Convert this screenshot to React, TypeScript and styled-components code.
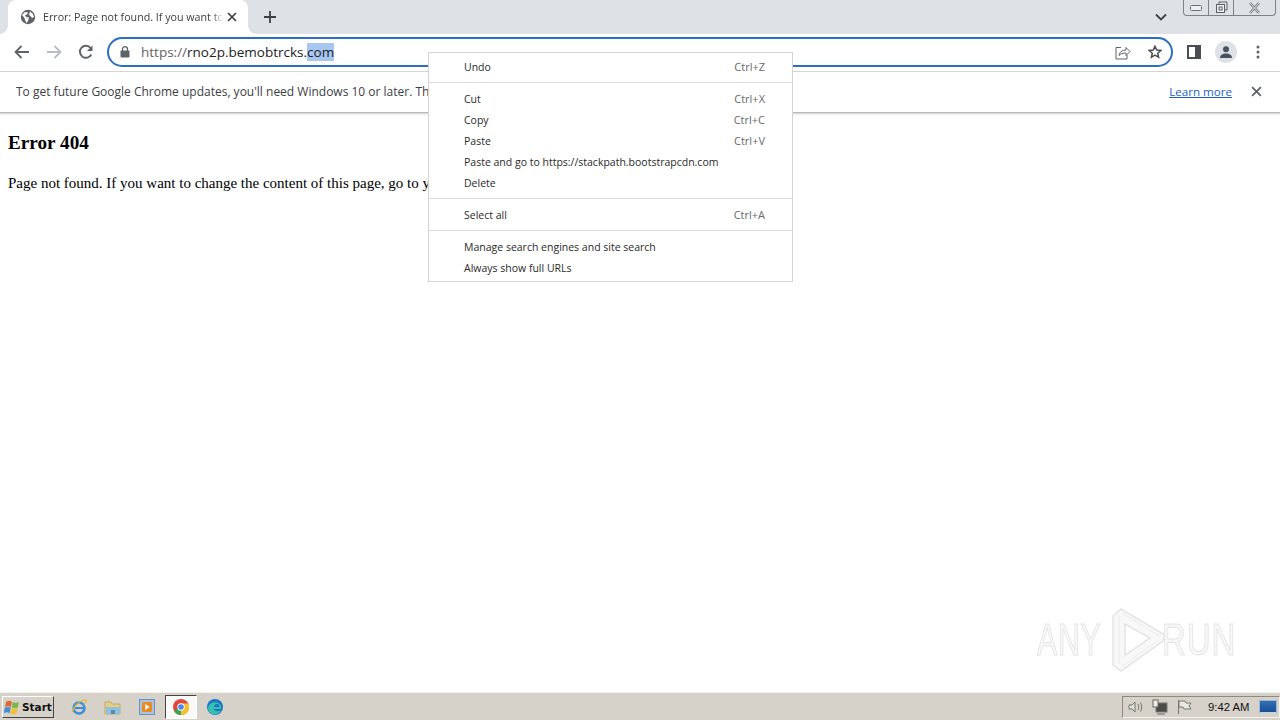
import React from 'react';
import styled, { createGlobalStyle } from 'styled-components';

const GlobalStyle = createGlobalStyle`
  html, body, #root {
    margin: 0;
    height: 100%;
  }
  body {
    overflow: hidden;
    background: #fff;
    font-family: "Open Sans", "Noto Sans", sans-serif;
  }
`;

const Screen = styled.div`
  position: relative;
  display: flex;
  flex-direction: column;
  width: 1280px;
  height: 720px;
  overflow: hidden;
`;

const TabStrip = styled.div`
  display: flex;
  height: 34px;
  flex-shrink: 0;
  padding-left: 8px;
  background: #dee1e6;
`;

const Tab = styled.div`
  position: relative;
  display: flex;
  align-items: center;
  width: 240px;
  height: 34px;
  padding: 0 11px 0 12px;
  box-sizing: border-box;
  background: #fff;
  border-radius: 8px 8px 0 0;

  &:before,
  &:after {
    content: "";
    position: absolute;
    bottom: 0;
    width: 8px;
    height: 8px;
  }
  &:before {
    left: -8px;
    background: radial-gradient(circle at 0 0, transparent 7.5px, #fff 8px);
  }
  &:after {
    right: -8px;
    background: radial-gradient(circle at 100% 0, transparent 7.5px, #fff 8px);
  }
`;

const TabTitle = styled.span`
  flex: 1;
  margin-left: 7px;
  overflow: hidden;
  white-space: nowrap;
  font-size: 10.7px;
  color: #3c4043;
  -webkit-mask-image: linear-gradient(90deg, #000 92%, transparent 98%);
  mask-image: linear-gradient(90deg, #000 92%, transparent 98%);
`;

const IconSlot = styled.span`
  display: flex;
  align-items: center;
  justify-content: center;
  flex-shrink: 0;
`;

const NewTab = styled(IconSlot)`
  width: 28px;
  height: 34px;
  margin-left: 8px;
`;

const StripSpacer = styled.div`
  flex: 1;
`;

const TabListButton = styled(IconSlot)`
  width: 20px;
  height: 34px;
  margin-right: 12px;
`;

const WindowControls = styled.div`
  display: flex;
  align-self: flex-start;
  height: 16px;
  margin-right: 4px;
  box-sizing: border-box;
  border: 1px solid #7d8288;
  border-top: none;
  border-radius: 0 0 4px 4px;
`;

const WindowButton = styled(IconSlot)<{ $w: number; $last?: boolean }>`
  width: ${p => p.$w}px;
  border-right: ${p => (p.$last ? 'none' : '1px solid #7d8288')};
`;

const Toolbar = styled.div`
  display: flex;
  align-items: center;
  height: 38px;
  flex-shrink: 0;
  padding: 0 0 1px 6px;
  box-sizing: border-box;
  background: #fff;
  border-bottom: 1px solid #d5d7da;
`;

const NavButton = styled(IconSlot)`
  width: 32px;
  height: 32px;
`;

const Omnibox = styled.div`
  display: flex;
  align-items: center;
  width: 1066px;
  height: 30px;
  margin-left: 5px;
  padding: 0 0 0 11px;
  box-sizing: border-box;
  border: 2px solid #2a6fc0;
  border-radius: 15px;
`;

const Url = styled.div`
  flex: 1;
  margin-left: 11px;
  font-size: 13.5px;
  line-height: 18px;
  color: #5f6368;
  white-space: nowrap;
`;

const UrlHost = styled.span`
  color: #202124;
`;

const UrlSelected = styled.span`
  color: #202124;
  background: #a8c7f0;
`;

const OmniAction = styled(IconSlot)`
  width: 32px;
`;

const SidePanelButton = styled(IconSlot)`
  width: 20px;
  margin-left: 11px;
`;

const Avatar = styled.span`
  display: flex;
  align-items: center;
  justify-content: center;
  width: 22px;
  height: 22px;
  margin-left: 11px;
  border-radius: 50%;
  background: #dee1e6;
`;

const MenuDots = styled(IconSlot)`
  width: 20px;
  margin-left: 11px;
`;

const InfoBar = styled.div`
  display: flex;
  align-items: center;
  height: 41px;
  flex-shrink: 0;
  padding: 0 18px 2px 16px;
  box-sizing: border-box;
  border-bottom: 1px solid #b9b9b9;
  box-shadow: 0 1px 2px rgba(0, 0, 0, 0.2);
  font-size: 12px;
  color: #3c4043;
`;

const InfoText = styled.span`
  flex: 1;
  white-space: nowrap;
  overflow: hidden;
`;

const LearnMore = styled.a`
  margin-right: 19px;
  font-size: 11.6px;
  color: #1a62c0;
  text-decoration: underline;
`;

const Page = styled.main`
  flex: 1;
  padding: 19px 8px 0;
  font-family: "Liberation Serif", "Times New Roman", serif;
  color: #000;
`;

const ErrorTitle = styled.h2`
  margin: 0 0 20px;
  font-size: 19.2px;
  line-height: 22px;
  font-weight: bold;
`;

const ErrorText = styled.p`
  margin: 0;
  font-size: 15px;
  line-height: 18px;
  white-space: nowrap;
`;

const ContextMenu = styled.div`
  position: absolute;
  left: 428px;
  top: 52px;
  width: 365px;
  height: 230px;
  box-sizing: border-box;
  padding: 4px 0;
  background: #fff;
  border: 1px solid #d4d4d4;
  font-size: 10.5px;
  color: #2a2a2a;
`;

const MenuRow = styled.div`
  display: flex;
  justify-content: space-between;
  height: 21px;
  padding: 0 27px 0 35px;
  line-height: 21px;
`;

const Shortcut = styled.span`
  font-size: 11px;
  line-height: 20px;
  color: #6a6a6a;
`;

const MenuDivider = styled.div`
  height: 1px;
  margin: 4px 0 6px;
  background: #dcdcdc;
`;

const Watermark = styled.div`
  position: absolute;
  left: 1037px;
  top: 608px;
  display: flex;
  align-items: center;
  height: 64px;
  gap: 2px;
  font-family: "Liberation Sans", Arial, sans-serif;
`;

const WatermarkWord = styled.span`
  display: inline-block;
  font-size: 42px;
  letter-spacing: 1px;
  color: #f8f8f8;
  -webkit-text-stroke: 1px #e4e4e4;
  transform: scale(0.72, 1.06);
  transform-origin: left center;
  white-space: nowrap;
`;

const WatermarkLeft = styled(WatermarkWord)`
  width: 66px;
`;

const WatermarkRight = styled(WatermarkWord)`
  width: 72px;
  margin-left: -7px;
  transform: scale(0.79, 1.06);
`;

const Taskbar = styled.footer`
  display: flex;
  align-items: center;
  height: 28px;
  flex-shrink: 0;
  box-sizing: border-box;
  padding: 1px 0 0 2px;
  background: #d6d2ca;
  border-top: 1px solid #f2f0ea;
`;

const StartButton = styled.div`
  display: flex;
  align-items: center;
  gap: 1px;
  width: 52px;
  height: 22px;
  box-sizing: border-box;
  padding-left: 1px;
  background: #d6d2ca;
  border: 1px solid;
  border-color: #fff #444 #444 #fff;
  font-family: "DejaVu Sans", Verdana, sans-serif;
  font-size: 10.5px;
  font-weight: bold;
  color: #111;
`;

const QuickLaunch = styled.div`
  display: flex;
  align-items: center;
  margin-left: 8px;
`;

const LaunchIcon = styled(IconSlot)<{ $active?: boolean }>`
  width: 34px;
  height: 24px;
  box-sizing: border-box;
  ${p => p.$active && `
    width: 32px;
    margin: 0 1px;
    background: #fbfaf8;
    border: 1px solid;
    border-color: #444 #fff #fff #444;
  `}
`;

const TaskSpacer = styled.div`
  flex: 1;
`;

const Tray = styled.div`
  display: flex;
  align-items: center;
  width: 158px;
  height: 22px;
  box-sizing: border-box;
  padding-left: 1px;
  border: 1px solid;
  border-color: #8d8a84 #f4f2ee #f4f2ee #8d8a84;
`;

const TrayIcon = styled(IconSlot)`
  width: 24px;
`;

const Clock = styled.span`
  margin-left: 12px;
  font-family: "Liberation Sans", Arial, sans-serif;
  font-size: 11.3px;
  color: #111;
  white-space: nowrap;
`;

const ShowDesktop = styled.span`
  display: block;
  width: 16px;
  height: 11px;
  margin: 0 2px 0 10px;
  background: linear-gradient(180deg, #2f6fb8, #1c4f94);
  border: 1px solid #9fb6cf;
  border-bottom: 2px solid #c9d4df;
`;

const GlobeIcon = () => (
  <svg width="16" height="16" viewBox="0 0 16 16">
    <circle cx="8" cy="8" r="7.2" fill="#5f6368" />
    <path d="M2 6l3-3 3 .5-1 2-2 .5 1 2 3 .5-1 3.5-1.5 2L5 11 4.5 9zM10 2.500l3 2.500 1 3-2 1-1.500-2-1.500-1 .5-2z" fill="#fff" />
  </svg>
);

const CloseGlyph = ({ size, color, w }: { size: number; color: string; w: number }) => (
  <svg width={size} height={size} viewBox="0 0 10 10">
    <path d="M1 1l8 8M9 1l-8 8" stroke={color} strokeWidth={w} fill="none" />
  </svg>
);

const ContextItems: (['row', string, string?] | ['sep'])[] = [
  ['row', 'Undo', 'Ctrl+Z'],
  ['sep'],
  ['row', 'Cut', 'Ctrl+X'],
  ['row', 'Copy', 'Ctrl+C'],
  ['row', 'Paste', 'Ctrl+V'],
  ['row', 'Paste and go to https://stackpath.bootstrapcdn.com'],
  ['row', 'Delete'],
  ['sep'],
  ['row', 'Select all', 'Ctrl+A'],
  ['sep'],
  ['row', 'Manage search engines and site search'],
  ['row', 'Always show full URLs'],
];

const App = () => (
  <Screen>
    <GlobalStyle />
    <TabStrip>
      <Tab>
        <GlobeIcon />
        <TabTitle>Error: Page not found. If you want to change</TabTitle>
        <CloseGlyph size={10} color="#3c4043" w={1.7} />
      </Tab>
      <NewTab>
        <svg width="14" height="14" viewBox="0 0 14 14">
          <path d="M7 1v12M1 7h12" stroke="#3c4043" strokeWidth="1.800" />
        </svg>
      </NewTab>
      <StripSpacer />
      <TabListButton>
        <svg width="12" height="8" viewBox="0 0 12 8">
          <path d="M1 1.500l5 5 5-5" stroke="#3c4043" strokeWidth="1.800" fill="none" />
        </svg>
      </TabListButton>
      <WindowControls>
        <WindowButton $w={24}>
          <svg width="12" height="6" viewBox="0 0 12 6">
            <rect x="0.500" y="0.500" width="11" height="5" rx="1" fill="#eef0f2" stroke="#6d7176" />
          </svg>
        </WindowButton>
        <WindowButton $w={24}>
          <svg width="13" height="13" viewBox="0 0 13 13">
            <path d="M4 3V1h8v8h-2" fill="none" stroke="#5c6066" />
            <rect x="1.500" y="3.500" width="8" height="8" fill="#eef0f2" stroke="#5c6066" />
            <rect x="4" y="6" width="3" height="3" fill="none" stroke="#5c6066" />
          </svg>
        </WindowButton>
        <WindowButton $w={41} $last>
          <svg width="13" height="12" viewBox="0 0 13 12">
            <path d="M2 1l9 10M11 1L2 11" stroke="#6d7176" strokeWidth="2.500" />
            <path d="M2 1l9 10M11 1L2 11" stroke="#eef0f2" strokeWidth="1" />
          </svg>
        </WindowButton>
      </WindowControls>
    </TabStrip>

    <Toolbar>
      <NavButton>
        <svg width="16" height="14" viewBox="0 0 16 14">
          <path d="M15 7H2M7.500 1L1.500 7l6 6" stroke="#5f6368" strokeWidth="1.800" fill="none" />
        </svg>
      </NavButton>
      <NavButton>
        <svg width="16" height="14" viewBox="0 0 16 14">
          <path d="M1 7h13M8.500 1l6 6-6 6" stroke="#b9bcc0" strokeWidth="1.800" fill="none" />
        </svg>
      </NavButton>
      <NavButton>
        <svg width="16" height="16" viewBox="0 0 16 16">
          <path d="M13.300 10.500A6 6 0 1 1 12.600 4" stroke="#5f6368" strokeWidth="1.900" fill="none" />
          <path d="M14.500 1.500V7H9z" fill="#5f6368" />
        </svg>
      </NavButton>
      <Omnibox>
        <svg width="10" height="12" viewBox="0 0 10 12">
          <rect x="0.500" y="4.500" width="9" height="7" rx="1" fill="#5f6368" />
          <path d="M2.500 5V3.200a2.500 2.500 0 0 1 5 0V5" stroke="#5f6368" strokeWidth="1.300" fill="none" />
        </svg>
        <Url>
          https://<UrlHost>rno2p.bemobtrcks.</UrlHost>
          <UrlSelected>com</UrlSelected>
        </Url>
        <OmniAction>
          <svg width="16" height="15" viewBox="0 0 16 15">
            <path d="M6 2.500H1v11.500h11v-4" stroke="#5f6368" strokeWidth="1" fill="none" />
            <path d="M4 10.500c.5-3.500 3-5.500 7-5.500V2.500l4 4-4 4V8c-3 0-5 .8-7 2.500z" stroke="#5f6368" strokeWidth="1" fill="none" />
          </svg>
        </OmniAction>
        <OmniAction>
          <svg width="14" height="14" viewBox="0 0 14 14">
            <path d="M7 1.300l1.700 3.800 4.100.4-3.100 2.700.9 4.100L7 10.200l-3.600 2.100.9-4.100-3.100-2.700 4.100-.4z" stroke="#4a4e52" strokeWidth="1.500" fill="none" />
          </svg>
        </OmniAction>
      </Omnibox>
      <SidePanelButton>
        <svg width="14" height="14" viewBox="0 0 14 14">
          <rect x="1" y="1" width="12" height="12" fill="#fff" stroke="#4a4e52" strokeWidth="2" />
          <rect x="8" y="1" width="5" height="12" fill="#4a4e52" />
        </svg>
      </SidePanelButton>
      <Avatar>
        <svg width="14" height="14" viewBox="0 0 14 14">
          <circle cx="7" cy="4.200" r="3" fill="#4a5160" />
          <path d="M1 13c0-3 2.500-4.500 6-4.500s6 1.500 6 4.500z" fill="#4a5160" />
        </svg>
      </Avatar>
      <MenuDots>
        <svg width="4" height="14" viewBox="0 0 4 14">
          <circle cx="2" cy="2" r="1.500" fill="#5f6368" />
          <circle cx="2" cy="7" r="1.500" fill="#5f6368" />
          <circle cx="2" cy="12" r="1.500" fill="#5f6368" />
        </svg>
      </MenuDots>
    </Toolbar>

    <InfoBar>
      <InfoText>To get future Google Chrome updates, you'll need Windows 10 or later. This computer is using Windows 7.</InfoText>
      <LearnMore>Learn more</LearnMore>
      <CloseGlyph size={11} color="#5f6368" w={1.6} />
    </InfoBar>

    <Page>
      <ErrorTitle>Error 404</ErrorTitle>
      <ErrorText>Page not found. If you want to change the content of this page, go to your website settings.</ErrorText>
    </Page>

    <ContextMenu>
      {ContextItems.map((item, i) =>
        item[0] === 'sep' ? (
          <MenuDivider key={i} />
        ) : (
          <MenuRow key={i}>
            <span>{item[1]}</span>
            {item[2] && <Shortcut>{item[2]}</Shortcut>}
          </MenuRow>
        ),
      )}
    </ContextMenu>

    <Watermark>
      <WatermarkLeft>ANY</WatermarkLeft>
      <svg width="62" height="64" viewBox="0 0 62 64">
        <path d="M8 8L16 1L60 27L58 33L16 63L8 57zM20 16V47L45 30z" fill="#f8f8f8" fillRule="evenodd" stroke="#e4e4e4" strokeWidth="1.500" />
        <path d="M14 7V56M17 5L54 28M17 58L54 32" fill="none" stroke="#ececec" />
      </svg>
      <WatermarkRight>RUN</WatermarkRight>
    </Watermark>

    <Taskbar>
      <StartButton>
        <svg width="17" height="17" viewBox="0 0 16 16">
          <path d="M2 2.500c2-1 3.500-1 5.500 0l-1 5c-2-1-3.500-1-5.500 0z" fill="#e2682c" />
          <path d="M8.300 2.900c2 1 3.500 1 5.700 0l-1 5c-2 1-3.700 1-5.700 0z" fill="#7ab648" />
          <path d="M.8 8.300c2-1 3.500-1 5.500 0l-1 5c-2-1-3.500-1-5.500 0z" fill="#3f8fd6" />
          <path d="M7.100 8.700c2 1 3.700 1 5.700 0l-1 5c-2 1-3.700 1-5.700 0z" fill="#f2bf2e" />
        </svg>
        Start
      </StartButton>
      <QuickLaunch>
        <LaunchIcon>
          <svg width="18" height="18" viewBox="0 0 18 18">
            <circle cx="9" cy="10" r="5.500" fill="none" stroke="#3a8fd8" strokeWidth="2.500" />
            <path d="M4 10h10" stroke="#3a8fd8" strokeWidth="2" />
            <path d="M2 14C5 6 11 2 16 2c1 2-1 4-2 5" fill="none" stroke="#e6b93c" strokeWidth="1.200" />
          </svg>
        </LaunchIcon>
        <LaunchIcon>
          <svg width="18" height="16" viewBox="0 0 18 16">
            <path d="M1 3h6l1 2h8v10H1z" fill="#e8cf85" stroke="#b99e58" strokeWidth="0.800" />
            <path d="M2 8h14v7H2z" fill="#8fc0dc" />
            <path d="M7 15v-4h4v4z" fill="#5a8cab" />
          </svg>
        </LaunchIcon>
        <LaunchIcon>
          <svg width="16" height="16" viewBox="0 0 16 16">
            <rect x="0.500" y="0.500" width="15" height="15" fill="#a9c3e3" stroke="#6f92bb" />
            <rect x="3" y="3" width="10" height="10" rx="1.500" fill="#ea8a1f" />
            <path d="M6.300 5l4.200 3-4.200 3z" fill="#fff" />
          </svg>
        </LaunchIcon>
        <LaunchIcon $active>
          <svg width="16" height="16" viewBox="0 0 16 16">
            <circle cx="8" cy="8" r="8" fill="#e0463a" />
            <path d="M8 8L1 12a8 8 0 0 0 7 4c1 0 2-.2 2.500-.5z" fill="#3aa757" />
            <path d="M8 4.500h7.500A8 8 0 0 1 8 16z" fill="#f5c02e" />
            <circle cx="8" cy="8" r="3.700" fill="#fff" />
            <circle cx="8" cy="8" r="2.800" fill="#4688ec" />
          </svg>
        </LaunchIcon>
        <LaunchIcon>
          <svg width="18" height="18" viewBox="0 0 18 18">
            <circle cx="9" cy="9" r="8" fill="#1b74c4" />
            <path d="M2 10c1-5 6-7 10-5 3 1.500 4 4 3 6H8c0 2 3 3 7 1.500-2 4-7 5-10 3-2-1.300-3-3.500-3-5.500z" fill="#35c1b0" />
            <path d="M8 9c0-2 1.500-3 3-3s2.500 1 2.500 3z" fill="#1b74c4" />
          </svg>
        </LaunchIcon>
      </QuickLaunch>
      <TaskSpacer />
      <Tray>
        <TrayIcon>
          <svg width="16" height="16" viewBox="0 0 16 16">
            <path d="M1 6h3l3-3v10l-3-3H1z" fill="#dfdfdb" stroke="#77776f" />
            <path d="M10 5c1 2 1 4 0 6M12.500 3.500c1.500 3 1.500 6 0 9" stroke="#77776f" fill="none" />
          </svg>
        </TrayIcon>
        <TrayIcon>
          <svg width="16" height="16" viewBox="0 0 16 16">
            <rect x="4" y="4" width="11" height="9" fill="#4c4c4a" stroke="#77776f" />
            <rect x="1" y="1" width="5" height="7" fill="#eeeeea" stroke="#66665f" />
            <path d="M5 15h8" stroke="#66665f" />
          </svg>
        </TrayIcon>
        <TrayIcon>
          <svg width="16" height="16" viewBox="0 0 16 16">
            <path d="M2.500 1v14" stroke="#77776f" />
            <path d="M3 2h6l1 2h5l-2 3 2 3H8L7 8H3z" fill="#e9e9e4" stroke="#77776f" />
          </svg>
        </TrayIcon>
        <Clock>9:42 AM</Clock>
        <ShowDesktop />
      </Tray>
    </Taskbar>
  </Screen>
);

export default App;
